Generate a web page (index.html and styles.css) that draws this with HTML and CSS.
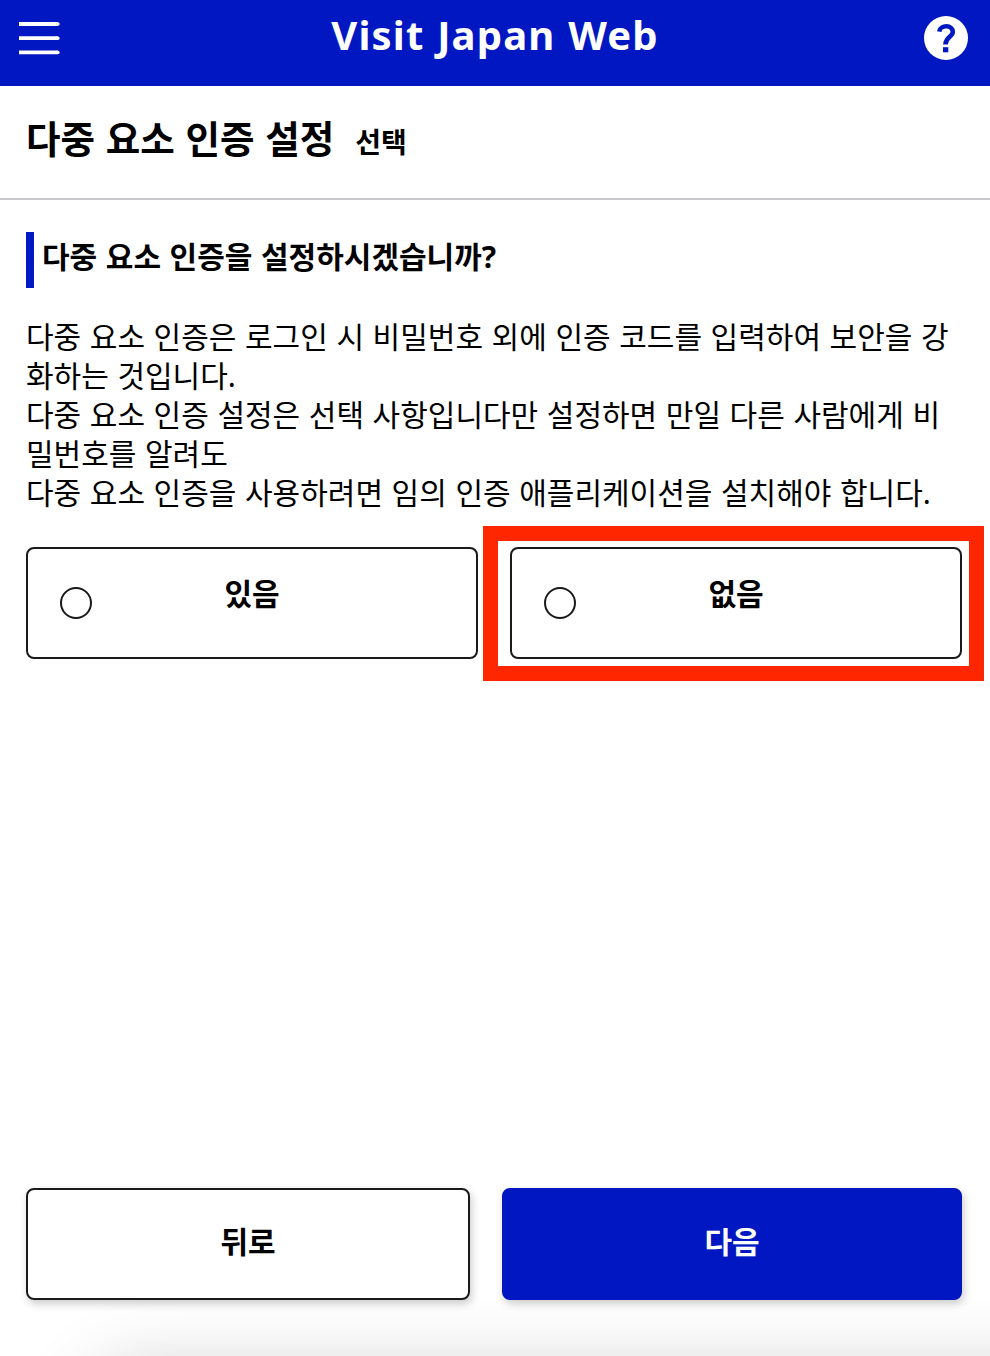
FILE: index.html
```html
<!DOCTYPE html>
<html lang="ko">
<head>
<meta charset="utf-8">
<title>Visit Japan Web</title>
<link rel="stylesheet" href="styles.css">
</head>
<body>
<div class="page">
  <header class="topbar">
    <svg class="menu" width="44" height="36" viewBox="0 0 44 36"><path d="M1 2H39.8M1 16.2H39.8M1 30.4H39.8" stroke="#fff" stroke-width="3.8" fill="none"/><path d="M38 2H40M38 16.2H40M38 30.4H40" stroke="#fff" stroke-width="3.4" stroke-linecap="round"/></svg>
    <h1 class="brand">Visit Japan Web</h1>
    <svg class="help" width="44" height="44" viewBox="0 0 44 44"><circle cx="22" cy="22" r="22" fill="#fff"/><path d="M15.2 15.6C16.2 8.6 28.8 8.2 28.8 16.1C28.8 20.8 21.5 21.3 21.5 28.4" stroke="#0017c1" stroke-width="4.6" fill="none"/><rect x="19" y="31.2" width="5.3" height="5.1" fill="#0017c1"/></svg>
  </header>
  <div class="title"><h2 class="title-main">다중 요소 인증 설정</h2><span class="title-sub">선택</span></div>
  <main class="content">
    <h3 class="question">다중 요소 인증을 설정하시겠습니까?</h3>
    <p class="text">다중 요소 인증은 로그인 시 비밀번호 외에 인증 코드를 입력하여 보안을 강<br>화하는 것입니다.<br>다중 요소 인증 설정은 선택 사항입니다만 설정하면 만일 다른 사람에게 비<br>밀번호를 알려도<br>다중 요소 인증을 사용하려면 임의 인증 애플리케이션을 설치해야 합니다.</p>
    <div class="options">
      <div class="option"><span class="radio"></span><span class="option-label">있음</span></div>
      <div class="option option-marked"><span class="radio"></span><span class="option-label">없음</span></div>
    </div>
    <div class="actions">
      <button class="button back">뒤로</button>
      <button class="button next">다음</button>
    </div>
  </main>
  <div class="footer-shade"><div class="footer-panel"></div></div>
</div>
</body>
</html>
```
FILE: styles.css
```css
* { box-sizing: border-box; }
body { margin: 0; background: #fff; color: #000; font-family: "Noto Sans", "Noto Sans CJK KR", sans-serif; }
h1, h2, h3, p { margin: 0; }
.page { height: 1356px; display: flex; flex-direction: column; overflow: hidden; }
.topbar { height: 86px; flex: none; background: #0017c1; display: grid; grid-template-columns: 44px 1fr 44px; align-items: start; padding: 16px 22px 0 18px; }
.menu { margin-top: 6px; }
.brand { margin-top: -1px; padding-left: 4px; text-align: center; color: #fff; font-size: 40px; line-height: 40px; letter-spacing: 1.15px; word-spacing: 1.2px; font-weight: 700; }
.title { height: 114px; flex: none; border-bottom: 2px solid #c8c8cc; padding: 25px 26px 0; display: flex; align-items: baseline; gap: 21px; line-height: 56px; }
.title-main { font-size: 37.5px; word-spacing: 1px; white-space: nowrap; }
.title-sub { font-size: 28px; font-weight: 700; }
.content { flex: 1; display: flex; flex-direction: column; padding: 32px 28px 0 26px; position: relative; z-index: 1; }
.question { height: 56px; border-left: 8px solid #0017c1; padding-left: 8px; font-size: 30px; line-height: 50px; word-spacing: .8px; white-space: nowrap; }
.text { margin-top: 29px; font-size: 30px; line-height: 39px; word-spacing: .8px; white-space: nowrap; }
.options { margin-top: 35px; display: grid; grid-template-columns: 1fr 1fr; gap: 32px; }
.option { height: 112px; border: 2px solid #1a1a1c; border-radius: 8px; display: flex; align-items: center; padding: 0 32px; }
.option-marked { position: relative; }
.option-marked::after { content: ""; position: absolute; top: -23px; right: -24px; bottom: -24px; left: -29px; border: 15px solid #ff2600; pointer-events: none; }
.radio { width: 32px; height: 32px; border: 2px solid #1a1a1c; border-radius: 50%; }
.option-label { flex: 1; margin-right: 32px; padding-bottom: 22px; text-align: center; font-size: 30px; font-weight: 700; }
.actions { margin-top: auto; display: grid; grid-template-columns: 444px 460px; gap: 32px; }
.button { height: 112px; border-radius: 8px; border: 2px solid #1a1a1c; background: #fff; color: #000; font: 700 30px/40px "Noto Sans", "Noto Sans CJK KR", sans-serif; padding: 0 0 4px; box-shadow: 2px 4px 8px rgba(0,0,0,.2); }
.next { background: #0017c1; border-color: #0017c1; color: #fff; }
.footer-shade { height: 56px; flex: none; overflow: hidden; }
.footer-panel { margin: 70px 0 0 84px; width: 1100px; height: 200px; border-radius: 60px; box-shadow: 0 0 76px rgba(0,0,0,.2); }
```
